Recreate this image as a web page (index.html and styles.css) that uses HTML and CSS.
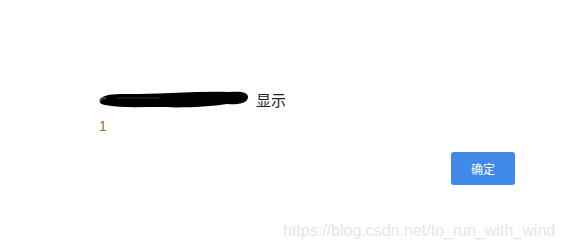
FILE: index.html
```html
<!DOCTYPE html>
<html lang="zh">
<head>
  <meta charset="UTF-8">
  <title>提示</title>
  <link rel="stylesheet" href="styles.css">
</head>
<body>
  <div class="dialog">
    <div class="msg">
      <svg class="scribble" width="150" height="20" viewBox="0 0 150 20">
        <path d="M2 10 C6 4 20 5 40 5 C70 5 100 2 130 3 C142 2 149 3 149 8 C149 14 140 16 128 15 C110 18 80 19 60 18 C40 18 20 19 6 16 C0 15 0 12 2 10 Z" fill="#000"/>
        <path d="M1 12 C3 8 5 8 7 10" stroke="#444" stroke-width="2" fill="none"/>
        <path d="M18 9 L60 9" stroke="#333" stroke-width="1" fill="none"/>
      </svg>
      <span class="msg-text">显示</span>
    </div>
    <div class="count">1</div>
    <div class="footer">
      <button class="btn">确定</button>
    </div>
  </div>
  <div class="watermark">https://blog.csdn.net/to_run_with_wind</div>
</body>
</html>
```

FILE: styles.css
```css
body {
  margin: 0;
  background: #fff;
  font-family: "Microsoft YaHei", "Liberation Sans", "Noto Sans CJK SC", sans-serif;
  width: 561px;
  height: 251px;
  overflow: hidden;
  position: relative;
}

.dialog {
  padding: 88px 46px 0 99px;
}

.msg {
  display: flex;
  align-items: center;
  gap: 7px;
  height: 22px;
  font-size: 15px;
  color: #222;
}

.scribble {
  display: block;
}

.count {
  margin-top: 8px;
  font-size: 14px;
  color: #a8692e;
  line-height: 16px;
}

.footer {
  display: flex;
  justify-content: flex-end;
  margin-top: 18px;
}

.btn {
  width: 64px;
  height: 33px;
  border: none;
  border-radius: 3px;
  background: #4189e8;
  color: #fff;
  font-family: inherit;
  font-size: 12px;
  cursor: pointer;
}

.watermark {
  position: absolute;
  left: 283px;
  top: 222px;
  font-family: "Liberation Sans", sans-serif;
  font-size: 16px;
  color: #e6e6e6;
}
```
